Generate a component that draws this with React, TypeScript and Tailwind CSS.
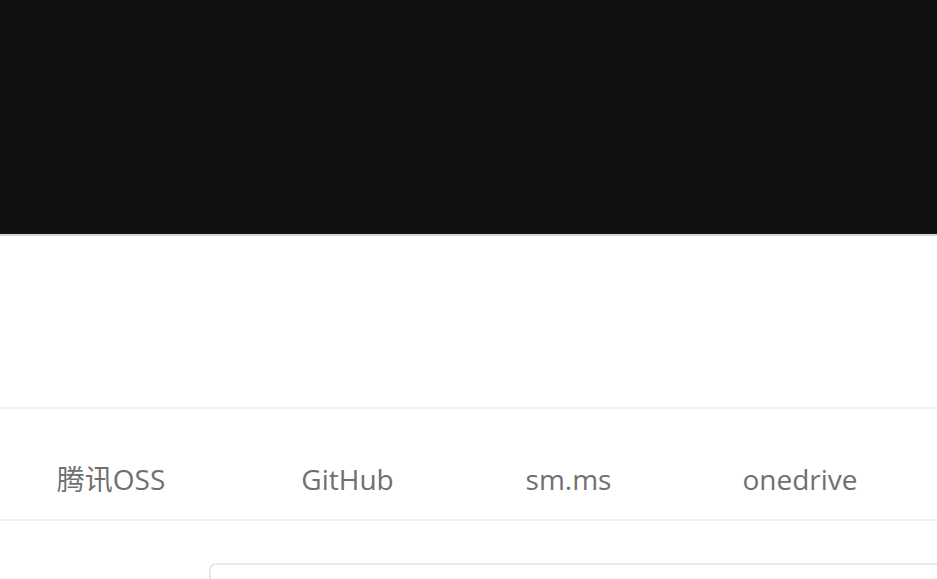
import React from "react";

export default function App() {
  const tabs = [
    { t: "腾讯OSS", w: "w-[112px]" },
    { t: "GitHub", w: "w-[91px]" },
    { t: "sm.ms", w: "w-[81px]" },
    { t: "onedrive", w: "w-[112px]" },
  ];
  return (
    <div
      className="w-[937px] h-[579px] overflow-hidden bg-white"
      style={{ fontFamily: '"Open Sans", "Noto Sans CJK SC", sans-serif' }}
    >
      <div className="h-[234px] bg-[#111111]" />
      <div className="h-[2px] bg-[#d6d6d6]" />
      <div className="h-[171px]" />
      <div className="h-[2px] bg-[#f1f2f4]" />
      <div className="h-[110px] flex items-center gap-[135px] pl-[55px] pt-[30px] text-[28px] text-[#707070] whitespace-nowrap">
        {tabs.map((x) => (
          <div key={x.t} className={`${x.w} flex justify-center leading-none`}>
            {x.t}
          </div>
        ))}
      </div>
      <div className="h-[2px] bg-[#eeeff1]" />
      <div className="pt-[42px] pl-[209px]">
        <div className="h-[60px] w-[800px] border-2 border-[#e8e8e8] rounded-[7px]" />
      </div>
    </div>
  );
}
